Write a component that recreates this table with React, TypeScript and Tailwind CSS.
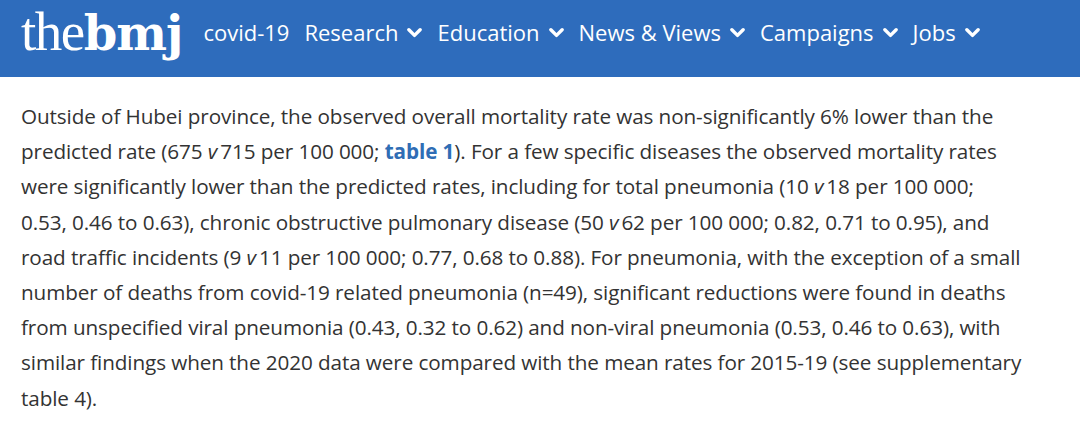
const NAV = [
  { label: "covid-19", menu: false },
  { label: "Research", menu: true },
  { label: "Education", menu: true },
  { label: "News & Views", menu: true },
  { label: "Campaigns", menu: true },
  { label: "Jobs", menu: true },
];

function Chevron() {
  return (
    <svg viewBox="0 0 16 12" className="w-[15px] h-[12px] ml-[9px] mt-[1px]" aria-hidden>
      <path d="M2 2.5 L8 8.5 L14 2.5" fill="none" stroke="white" strokeWidth="3.6" strokeLinecap="round" strokeLinejoin="round" />
    </svg>
  );
}

const V = () => <i className="italic mr-[3px]">v</i>;

export default function App() {
  return (
    <div className="w-[1080px] h-[425px] bg-white overflow-hidden">
      {/* top bar */}
      <header className="h-[77px] bg-[#2e6cbc] flex items-start pl-[21px] pt-[4px]">
        <div className="flex items-baseline text-white leading-none select-none">
          <span className="text-[55px] tracking-[-1.5px] font-['Liberation_Serif',serif]">the</span>
          <span className="text-[48px] font-bold tracking-[-1px] font-['DejaVu_Serif',serif]">bmj</span>
        </div>
        <nav className="flex items-center ml-[21px] mt-[12px] text-white text-[22px] font-['Open_Sans',sans-serif]">
          {NAV.map((n) => (
            <div key={n.label} className="flex items-center mr-[15px]">
              <span>{n.label}</span>
              {n.menu && <Chevron />}
            </div>
          ))}
        </nav>
      </header>

      {/* article body */}
      <p className="pl-[21px] pt-[22px] text-[20.7px] leading-[35.2px] text-[#333333] font-['Open_Sans',sans-serif] tracking-[-0.1px]">
        Outside of Hubei province, the observed overall mortality rate was non-significantly 6% lower than the
        <br />
        predicted rate (675 <V />715 per 100 000;{" "}
        <a className="font-bold text-[#2f6db5]">table 1</a>). For a few specific diseases the observed mortality rates
        <br />
        were significantly lower than the predicted rates, including for total pneumonia (10 <V />18 per 100 000;
        <br />
        0.53, 0.46 to 0.63), chronic obstructive pulmonary disease (50 <V />62 per 100 000; 0.82, 0.71 to 0.95), and
        <br />
        road traffic incidents (9 <V />11 per 100 000; 0.77, 0.68 to 0.88). For pneumonia, with the exception of a small
        <br />
        number of deaths from covid-19 related pneumonia (n=49), significant reductions were found in deaths
        <br />
        from unspecified viral pneumonia (0.43, 0.32 to 0.62) and non-viral pneumonia (0.53, 0.46 to 0.63), with
        <br />
        similar findings when the 2020 data were compared with the mean rates for 2015-19 (see supplementary
        <br />
        table 4).
      </p>
    </div>
  );
}
